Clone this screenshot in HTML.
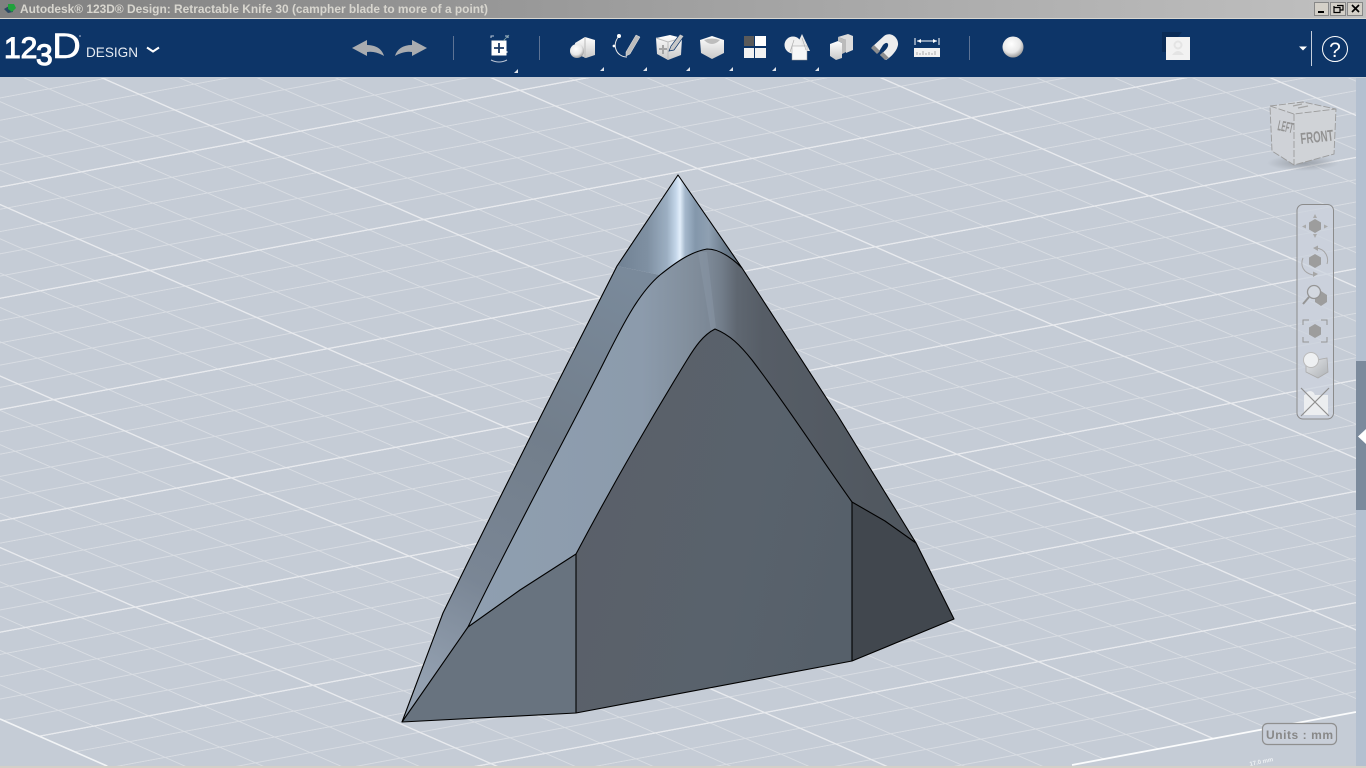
<!DOCTYPE html>
<html><head><meta charset="utf-8"><style>
html,body{margin:0;padding:0;width:1366px;height:768px;overflow:hidden;background:#c5ccd6}
svg{position:absolute;left:0;top:0}
text{font-family:"Liberation Sans",sans-serif}
</style></head><body>
<svg width="1366" height="768" viewBox="0 0 1366 768" xmlns="http://www.w3.org/2000/svg">
<defs>
<pattern id="grid" patternUnits="userSpaceOnUse" width="171.5" height="111.3" patternTransform="matrix(-1.597 .297 1.597 .703 0 0)">
<g stroke="#d9dde3" fill="none">
<path stroke-width="1" d="M67.3 0V111.3M101.6 0V111.3M135.9 0V111.3M170.2 0V111.3"/>
<path stroke-width=".95" d="M0 97.96H171.5M0 8.96H171.5M0 31.22H171.5M0 53.48H171.5"/>
</g>
<g stroke="#e8eaee" fill="none"><path stroke-width="1.5" d="M33 0V111.3"/><path stroke-width="1.4" d="M0 75.7H171.5"/></g>
</pattern>
<clipPath id="gc"><path d="M0 78V719L391 891L1356 712V78Z"/></clipPath>
<linearGradient id="tb" x1="0" x2="1" y1="0" y2="0"><stop offset="0" stop-color="#808080"/><stop offset="1" stop-color="#c0c0c0"/></linearGradient>
<linearGradient id="cone" gradientUnits="userSpaceOnUse" x1="615" y1="0" x2="745" y2="0">
<stop offset="0" stop-color="#6f8092"/><stop offset=".25" stop-color="#7f90a2"/><stop offset=".4" stop-color="#9cafc2"/><stop offset=".47" stop-color="#c5d7ea"/><stop offset=".5" stop-color="#e2eefa"/><stop offset=".54" stop-color="#a4b7cb"/><stop offset=".62" stop-color="#8397ab"/><stop offset=".72" stop-color="#8fa0b2"/><stop offset=".85" stop-color="#6a7a8a"/><stop offset="1" stop-color="#5b6672"/></linearGradient>
<linearGradient id="band" gradientUnits="userSpaceOnUse" x1="470" y1="0" x2="900" y2="0">
<stop offset="0" stop-color="#8f9fb0"/><stop offset=".4" stop-color="#8c9bac"/><stop offset=".5" stop-color="#83909e"/><stop offset=".56" stop-color="#7b8795"/><stop offset=".585" stop-color="#727d8a"/><stop offset=".62" stop-color="#5f6771"/><stop offset=".68" stop-color="#565d66"/><stop offset="1" stop-color="#50575f"/></linearGradient>
<linearGradient id="sl" gradientUnits="userSpaceOnUse" x1="620" y1="270" x2="420" y2="680">
<stop offset="0" stop-color="#7a8a9b"/><stop offset=".4" stop-color="#727e8b"/><stop offset=".75" stop-color="#7a8695"/><stop offset="1" stop-color="#93a0b0"/></linearGradient>
<linearGradient id="cen" gradientUnits="userSpaceOnUse" x1="576" y1="500" x2="852" y2="560">
<stop offset="0" stop-color="#5a6069"/><stop offset=".6" stop-color="#59626c"/><stop offset="1" stop-color="#56606a"/></linearGradient>
<radialGradient id="ball" cx=".42" cy=".35" r=".7"><stop offset="0" stop-color="#fff"/><stop offset=".6" stop-color="#e8e8e8"/><stop offset="1" stop-color="#8d8d8d"/></radialGradient>
<linearGradient id="iw" x1="0" x2="0" y1="0" y2="1"><stop offset="0" stop-color="#fff"/><stop offset="1" stop-color="#c8c8c8"/></linearGradient>
<linearGradient id="box" x1="0" x2="1" y1="0" y2="1"><stop offset="0" stop-color="#e4e6e9"/><stop offset="1" stop-color="#aeb2b6"/></linearGradient>
<radialGradient id="sh"><stop offset="0" stop-color="#8e949c" stop-opacity=".8"/><stop offset="1" stop-color="#8e949c" stop-opacity="0"/></radialGradient>
</defs>

<!-- viewport -->
<rect x="0" y="77" width="1366" height="691" fill="#c5ccd6"/>
<g clip-path="url(#gc)"><rect x="0" y="78" width="1366" height="690" fill="url(#grid)"/></g>
<path d="M0 719L107 766" stroke="#f2f4f6" stroke-width="1.6" fill="none"/>
<path d="M1356 712L1262 729.5M1262 729.5L1072 765" stroke="#fbfcfd" stroke-width="1.8" fill="none"/>

<!-- model -->
<path d="M617 266C590 320 540 415 443 613L402 722L468 627C520 520 565 440 605 360C625 320 640 292 660 275Z" fill="url(#sl)"/>
<path d="M678 175L617 266L660 275C675 263 690 252 707 249C720 249 732 258 742 268Z" fill="url(#cone)"/>
<path d="M468 627C520 520 565 440 605 360C625 320 640 292 660 275C675 263 690 252 707 249C720 249 732 258 742 268L838 416L916 543L885 521L852 502C815 450 790 410 752 360C740 345 730 335 715 329C703 335 695 347 687 360C650 420 610 490 576 554L520 590Z" fill="url(#band)"/>
<path d="M698 252L707 252L716 328L711 331Z" fill="#8b99a8" fill-opacity=".45"/>
<path d="M402 722L468 627L520 590L576 554V713Z" fill="#68737f"/>
<path d="M576 554C610 490 650 420 687 360C695 347 703 335 715 329C730 335 740 345 752 360C790 410 815 450 852 502V661L576 713Z" fill="url(#cen)"/>
<path d="M852 502L885 521L916 543L954 619L852 661Z" fill="#41474e"/>
<g fill="none" stroke="#000" stroke-width="1.1" stroke-linejoin="round">
<path d="M678 175L617 266C590 320 540 415 443 613L402 722L576 713L852 661L954 619L916 543L838 416L742 268Z"/>
<path d="M468 627C520 520 565 440 605 360C625 320 640 292 660 275C675 263 690 252 707 249C720 249 732 258 742 268"/>
<path d="M402 722L468 627L520 590L576 554C610 490 650 420 687 360C695 347 703 335 715 329C730 335 740 345 752 360C790 410 815 450 852 502L885 521L916 543"/>
<path d="M576 554V713M852 502V661"/>
</g>

<!-- right strip -->
<rect x="1356" y="78" width="10" height="690" fill="#b4c0d0"/>
<rect x="1356" y="361" width="10" height="149" fill="#7b8a9c"/>
<path d="M1366 429L1358 436.500L1366 444Z" fill="#fff"/>
<rect x="0" y="766" width="1366" height="2" fill="#d4d0c8"/>

<!-- title bar -->
<rect width="1366" height="18" fill="url(#tb)"/>
<rect y="18" width="1366" height="1" fill="#d8d6d0"/>
<rect y="19" width="1366" height="58" fill="#0d3568"/>
<g><path d="M4 9L9 6L13 8V12L8 13Z" fill="#2b4a63"/><path d="M8 4L14 4L16 8L12 12L8 9Z" fill="#1fa23c"/></g>
<text x="20" y="13" font-size="11.500" font-weight="700" fill="#d8d6cf" textLength="468" lengthAdjust="spacingAndGlyphs">Autodesk® 123D® Design: Retractable Knife 30 (campher blade to more of a point)</text>
<g stroke="#fff"><rect x="1314.500" y="2.500" width="14" height="13" fill="#d4d0c8" stroke="#888"/><rect x="1330.500" y="2.500" width="15" height="13" fill="#d4d0c8" stroke="#888"/><rect x="1347.500" y="2.500" width="15" height="13" fill="#d4d0c8" stroke="#888"/></g>
<path d="M1318 12H1324" stroke="#000" stroke-width="2"/>
<path d="M1334 7.500H1340V12.500H1334ZM1334 7.500V6M1337 5.500H1343V10H1340" fill="none" stroke="#000" stroke-width="1.2"/>
<path d="M1352 5L1359 12M1359 5L1352 12" stroke="#000" stroke-width="1.700"/>

<!-- logo -->
<text x="4" y="58" font-size="30" fill="#fff" stroke="#fff" stroke-width="1.100">12</text>
<text x="36" y="65" font-size="30" fill="#fff" stroke="#fff" stroke-width="1.100">3</text>
<text x="52" y="58" font-size="35" fill="#fff" stroke="#fff" stroke-width=".4" textLength="29" lengthAdjust="spacingAndGlyphs">D</text>
<circle cx="80" cy="36" r=".8" fill="#ccd"/>
<text x="86" y="57" font-size="14" fill="#e6ebf2" textLength="52" lengthAdjust="spacingAndGlyphs">DESIGN</text>
<path d="M147 47.500L153 51.500L159 47.500" fill="none" stroke="#fff" stroke-width="2"/>

<!-- undo/redo -->
<path d="M352 48L367 40V45C376 45 382 49 384 56C379 53 373 51 367 52V56Z" fill="#a9acb0"/>
<path d="M427 48L412 40V45C403 45 397 49 395 56C400 53 406 51 412 52V56Z" fill="#a9acb0"/>
<path d="M453.500 36V60M539.500 36V60" stroke="#5d7394" stroke-width="1"/>

<!-- snap -->
<rect x="491" y="40" width="16" height="16" fill="#fff" stroke="#0d3568"/>
<path d="M499 43V53M494 48H504" stroke="#1b3a66" stroke-width="1.800"/>
<path d="M491 38V36H494M505 36H508V38M507 51V53M491 60Q499 64 507 60" fill="none" stroke="#bcc6d6"/>
<path d="M503 41L509 35" stroke="#8aa" stroke-width=".8"/>
<g fill="#dfe3ea"><path d="M518 69V73H514ZM604 67V71H600ZM647 67V71H643ZM690 67V71H686ZM733 67V71H729ZM776 67V71H772ZM819 67V71H815Z"/></g>

<!-- primitives -->
<path d="M575 43L585 37L595 40V55L586 58L576 54Z" fill="url(#iw)"/><path d="M585 37V58" stroke="#bbb"/>
<circle cx="577" cy="51" r="7" fill="url(#ball)"/>
<!-- sketch -->
<path d="M619 36C611 46 617 57 627 57" fill="none" stroke="#e8e8e8" stroke-width="1"/>
<circle cx="619" cy="36" r="2" fill="#fff"/><circle cx="614" cy="46" r="1.400" fill="#fff"/>
<path d="M636 35L640 37L630 54L626 56L626 52Z" fill="#bdbdbd" stroke="#e8e8e8" stroke-width=".5"/>
<!-- construct -->
<path d="M656 38L670 35L682 38L681 55L668 60L657 54Z" fill="url(#iw)"/>
<path d="M668 42L668 60M656 38L668 42L682 38" stroke="#bbb" fill="none"/>
<path d="M659 49H667M663 45V54" stroke="#a5a5a5" stroke-width="2"/>
<path d="M680 34L684 36L674 50L669 51L671 46Z" fill="#c8c8c8" stroke="#0d3568" stroke-width=".7"/>
<!-- modify -->
<path d="M700 40L712 36L724 40V53L712 59L701 53Z" fill="url(#iw)"/>
<path d="M704 40Q712 48 720 40Q712 37 704 40Z" fill="#bdbdbd"/>
<!-- pattern -->
<rect x="744" y="36" width="10" height="10" fill="#5a5a5a"/><rect x="755" y="36" width="11" height="10" fill="#fff"/><rect x="744" y="48" width="10" height="10" fill="#f2f2f2"/><rect x="755" y="48" width="11" height="10" fill="#f2f2f2"/>
<!-- group -->
<path d="M802 34L810 51H794Z" fill="#e8e8e8"/>
<circle cx="793" cy="45" r="8.500" fill="#f0f0f0"/>
<rect x="792" y="46" width="15" height="14" fill="#f7f7f7" stroke="#999" stroke-width=".5"/>
<path d="M794 40L790 52M802 38L806 50" stroke="#a8a8a8" stroke-width=".6"/>
<!-- combine -->
<path d="M838 37L848 34L853 36V50L846 53V40Z" fill="#dcdcdc"/>
<path d="M830 44L838 41L842 43V58L836 60L830 56Z" fill="url(#iw)"/>
<path d="M838 37L846 40V52L842 54V43L838 41Z" fill="#bbb"/>
<!-- magnet -->
<path d="M872 47L884 36C891 31 899 38 898 45C897 51 891 57 886 60L880 55C885 51 889 47 888 44C887 42 885 43 883 45L878 53Z" fill="#ededed"/>
<path d="M871 48L877 54L880 51L874 45ZM885 60L880 55L883 52L889 58Z" fill="#8e8e8e"/>
<!-- measure -->
<path d="M915 38V45M939 38V45" stroke="#fff"/>
<path d="M917 41H937" stroke="#fff" stroke-width="1"/>
<path d="M917 41L921 39V43ZM937 41L933 39V43Z" fill="#fff"/>
<rect x="914" y="48" width="26" height="9" fill="#f2f2f2"/>
<path d="M917 55V52M920 55V53M923 55V51M926 55V53M929 55V52M932 55V53M935 55V51" stroke="#999" stroke-width=".8"/>
<path d="M969.500 36V60" stroke="#5d7394"/>
<circle cx="1013" cy="47" r="10.500" fill="url(#ball)"/>

<!-- account -->
<path d="M1162 32H1182L1166 52H1162Z" fill="#0a2b56"/>
<rect x="1166" y="37" width="24" height="23" fill="#f2f2f2"/>
<circle cx="1178" cy="45" r="3.500" fill="none" stroke="#e4e4e4" stroke-width="2"/><path d="M1172 55Q1178 47 1184 55Z" fill="#e4e4e4"/>
<path d="M1299 46.500H1307L1303 50.500Z" fill="#fff"/>
<path d="M1311.500 31V66" stroke="#c6cfdc"/>
<circle cx="1335" cy="49" r="12.500" fill="none" stroke="#fff" stroke-width="1"/>
<text x="1335" y="57" text-anchor="middle" font-size="21" fill="#fff">?</text>

<!-- view cube -->
<ellipse cx="1303" cy="163" rx="36" ry="8" fill="url(#sh)"/>
<path d="M1270 106L1303 102L1336 109L1294 114Z" fill="#d2d5d9"/>
<path d="M1270 106L1294 114V165L1272 151Z" fill="#cfd2d7"/>
<path d="M1294 114L1336 109L1334 154L1294 165Z" fill="#d0d3d7"/>
<path d="M1270 106L1303 102L1336 109L1334 154L1294 165L1272 151ZM1270 106L1294 114L1336 109M1294 114V165" fill="none" stroke="#9b9b9b" stroke-dasharray="7 2" stroke-width=".9"/>
<text transform="translate(1301,144) rotate(-6) scale(.64,1.050)" font-size="15" font-weight="700" fill="#929292">FRONT</text>
<text transform="translate(1277,130) rotate(12) scale(.44,1.050)" font-size="14" font-weight="700" fill="#929292">LEFT</text>
<path d="M1293 106L1302 104M1298 108L1308 106" stroke="#a5a5a5" stroke-width="1.200"/>

<!-- nav bar -->
<rect x="1297" y="204.500" width="36.500" height="214.500" rx="6" fill="#ccd3de" fill-opacity=".75" stroke="#8b8b8b" stroke-width="1"/>
<g fill="#9d9d9d">
<path d="M1315 219L1321 222.500V229.500L1315 233L1309 229.500V222.500Z"/>
<path d="M1315 214L1317 218H1313ZM1315 238L1313 234H1317ZM1302 226.500L1306 224.500V228.500ZM1328 226.500L1324 224.500V228.500Z" fill="#aaa"/>
<path d="M1315 254L1321 257.500V264.500L1315 268L1309 264.500V257.500Z"/>
<path d="M1315 324L1321 327.500V334.500L1315 338L1309 334.500V327.500Z"/>
<path d="M1321 291L1327 295V302L1321 306L1315 302V295Z"/>
</g>
<path d="M1316 248C1326 249 1329 258 1327 264M1313 275C1303 273 1300 265 1303 258" fill="none" stroke="#a5a5a5" stroke-width="1"/>
<path d="M1313 248L1318 245.500V251ZM1318 274L1313 271.500V277Z" fill="#a5a5a5"/>
<circle cx="1314" cy="292" r="6.500" fill="#d3d8e0" stroke="#959595" stroke-width="1.300"/>
<path d="M1309 297L1303 304" stroke="#959595" stroke-width="2"/>
<path d="M1303 325V320H1309M1321 320H1327V325M1327 337V342H1321M1309 342H1303V337" fill="none" stroke="#959595"/>
<path d="M1306 362L1327 358L1328 372L1318 378L1306 372Z" fill="url(#box)" stroke="#aaa" stroke-width=".8"/>
<circle cx="1311" cy="360" r="7.500" fill="#eef0f2" stroke="#bbb"/>
<path d="M1304 395H1328V415H1304Z" fill="#eceef0"/>
<circle cx="1310" cy="396" r="5" fill="#eceef0"/>
<path d="M1301 388L1329 416M1329 388L1301 416" stroke="#8f8f8f" stroke-width="1.200"/>

<!-- units -->
<rect x="1262.500" y="723.500" width="74" height="21" rx="5" fill="#c9cfd9" stroke="#8f8f8f" stroke-width="1.200"/>
<text x="1266" y="739" font-size="12" font-weight="700" fill="#888" textLength="67">Units : mm</text>
<text transform="translate(1250,766) rotate(-12)" font-size="6" font-weight="700" fill="#eef1f4">17.0 mm</text>
</svg>
</body></html>
